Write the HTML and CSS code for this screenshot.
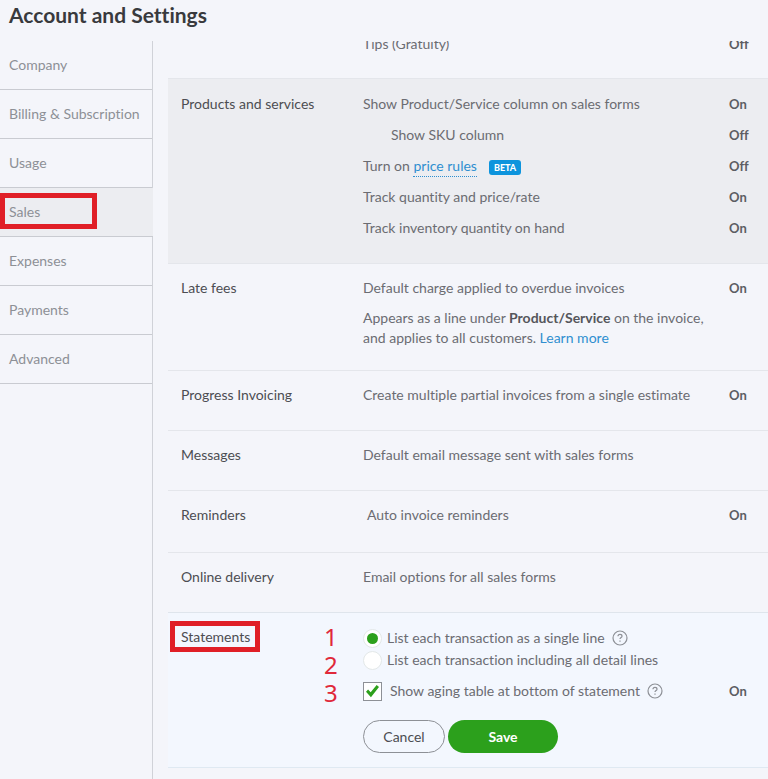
FILE: index.html
```html
<!DOCTYPE html>
<html lang="en">
<head>
  <meta charset="UTF-8">
  <meta name="viewport" content="width=device-width, initial-scale=1.0">
  <title>Account and Settings</title>
  <link rel="stylesheet" href="styles.css">
</head>
<body>
  <header class="page-header">
    <h1>Account and Settings</h1>
  </header>

  <div class="layout">
    <!-- Side navigation -->
    <nav class="sidebar">
      <a href="#company">Company</a>
      <a href="#billing">Billing &amp; Subscription</a>
      <a href="#usage">Usage</a>
      <a href="#sales" class="active">Sales<span class="highlight highlight-nav"></span></a>
      <a href="#expenses">Expenses</a>
      <a href="#payments">Payments</a>
      <a href="#advanced">Advanced</a>
    </nav>

    <!-- Sales settings -->
    <main class="settings">
      <section class="section section-first">
        <div class="lines">
          <div class="line"><span>Tips (Gratuity)</span><span class="status">Off</span></div>
        </div>
      </section>

      <section class="section section-hover">
        <h2>Products and services</h2>
        <div class="lines">
          <div class="line"><span>Show Product/Service column on sales forms</span><span class="status">On</span></div>
          <div class="line"><span class="indent">Show SKU column</span><span class="status">Off</span></div>
          <div class="line">
            <span>Turn on <a href="#price-rules" class="dotted">price rules</a><span class="badge">BETA</span></span>
            <span class="status">Off</span>
          </div>
          <div class="line"><span>Track quantity and price/rate</span><span class="status">On</span></div>
          <div class="line"><span>Track inventory quantity on hand</span><span class="status">On</span></div>
        </div>
      </section>

      <section class="section section-fees">
        <h2>Late fees</h2>
        <div class="lines">
          <div class="line"><span>Default charge applied to overdue invoices</span><span class="status">On</span></div>
          <p>Appears as a line under <strong>Product/Service</strong> on the invoice,<br>and applies to all customers. <a href="#learn-more">Learn more</a></p>
        </div>
      </section>

      <section class="section">
        <h2>Progress Invoicing</h2>
        <div class="lines">
          <div class="line"><span>Create multiple partial invoices from a single estimate</span><span class="status">On</span></div>
        </div>
      </section>

      <section class="section">
        <h2>Messages</h2>
        <div class="lines">
          <div class="line"><span>Default email message sent with sales forms</span></div>
        </div>
      </section>

      <section class="section section-reminders">
        <h2>Reminders</h2>
        <div class="lines">
          <div class="line"><span class="nudge">Auto invoice reminders</span><span class="status">On</span></div>
        </div>
      </section>

      <section class="section">
        <h2>Online delivery</h2>
        <div class="lines">
          <div class="line"><span>Email options for all sales forms</span></div>
        </div>
      </section>

      <section class="section section-editing">
        <h2>Statements<span class="highlight highlight-title"></span></h2>
        <form class="statement-form">
          <div class="steps">
            <span>1</span>
            <span>2</span>
            <span>3</span>
          </div>
          <div class="option">
            <input type="radio" name="listing" id="single-line" checked>
            <label for="single-line">List each transaction as a single line</label>
            <svg class="help" viewBox="0 0 16 16" aria-hidden="true">
              <circle cx="8" cy="8" r="7"/>
              <path d="M6 6.3C6 5.1 6.9 4.4 8 4.4s2 .7 2 1.8c0 1.3-2 1.4-2 2.9M8 10.6v1.2"/>
            </svg>
          </div>
          <div class="option">
            <input type="radio" name="listing" id="detail-lines">
            <label for="detail-lines">List each transaction including all detail lines</label>
          </div>
          <div class="option option-check">
            <input type="checkbox" id="aging-table" checked>
            <label for="aging-table">Show aging table at bottom of statement</label>
            <svg class="help" viewBox="0 0 16 16" aria-hidden="true">
              <circle cx="8" cy="8" r="7"/>
              <path d="M6 6.3C6 5.1 6.9 4.4 8 4.4s2 .7 2 1.8c0 1.3-2 1.4-2 2.9M8 10.6v1.2"/>
            </svg>
            <span class="status">On</span>
          </div>
          <div class="actions">
            <button type="button" class="btn-cancel">Cancel</button>
            <button type="button" class="btn-save">Save</button>
          </div>
        </form>
      </section>
    </main>
  </div>
</body>
</html>
```

FILE: styles.css
```css
* {
  margin: 0;
  padding: 0;
  box-sizing: border-box;
}

body {
  font-family: Lato, "Liberation Sans", sans-serif;
  font-size: 14px;
  line-height: 20px;
  font-variant-ligatures: none;
  background-color: #f4f5fa;
  color: #6b6c72;
  min-height: 100vh;
  display: flex;
  flex-direction: column;
}

a {
  color: #2f8fd0;
  text-decoration: none;
}

.page-header {
  padding: 2px 9px 13px;
}

h1 {
  font-size: 21px;
  line-height: 26px;
  font-weight: bold;
  color: #393a3d;
}

.layout {
  display: flex;
  flex: 1;
}

/* Side navigation */
.sidebar {
  width: 153px;
  flex-shrink: 0;
  border-right: 1px solid #d0d2d8;
}

.sidebar a {
  display: flex;
  align-items: center;
  position: relative;
  height: 49px;
  padding-left: 9px;
  border-bottom: 1px solid #c9cbd1;
  color: #8d9096;
}

.sidebar .active {
  background-color: #ecedf1;
  margin-right: -1px;
}

/* Settings list */
.settings {
  flex: 1;
  margin-left: 15px;
  overflow: hidden;
}

.section {
  display: grid;
  grid-template-columns: 182px 1fr;
  padding: 14px 0 25px 13px;
  border-top: 1px solid #e4e6eb;
}

.section .lines,
.section .statement-form {
  grid-column: 2;
}

/* scrolled partly under the page header */
.section-first {
  margin-top: -22px;
  padding-bottom: 24px;
}

.section-hover {
  background-color: #ecedf1;
  padding-top: 15px;
}

.section-fees {
  padding-bottom: 22px;
}

.section-fees .lines {
  gap: 10px;
}

.section-reminders {
  padding-bottom: 27px;
}

h2 {
  position: relative;
  font-size: 14px;
  line-height: 20px;
  font-weight: normal;
  color: #4c4d52;
}

.lines {
  display: flex;
  flex-direction: column;
  gap: 11px;
}

.line {
  display: flex;
  justify-content: space-between;
  height: 20px;
}

.status {
  width: 39px;
  font-size: 13px;
  font-weight: bold;
  color: #5c5d63;
}

.indent {
  padding-left: 28px;
}

.nudge {
  padding-left: 4px;
}

.dotted {
  padding-bottom: 2px;
  border-bottom: 1px dotted #2f8fd0;
}

.badge {
  display: inline-block;
  margin-left: 12px;
  padding: 2px 5px 1px;
  border-radius: 3px;
  background-color: #0d94dd;
  color: #fff;
  font-size: 9px;
  line-height: 12px;
  font-weight: 900;
}

strong {
  color: #55565b;
}

/* Statements form */
.section-editing {
  background-color: #f3f7fe;
  padding-bottom: 14px;
  border-color: #dfe5ec;
  border-bottom: 1px solid #dfe9f2;
}

.statement-form {
  position: relative;
}

.option {
  display: flex;
  align-items: center;
  height: 22px;
}

.option-check {
  margin-top: 9px;
}

.option .status {
  margin-left: auto;
}

input {
  appearance: none;
  display: grid;
  place-items: center;
  width: 19px;
  height: 19px;
  background-color: #fff;
}

input[type="radio"] {
  margin-right: 5px;
  border: 1px solid #e3e8e8;
  border-radius: 50%;
}

input[type="radio"]:checked::before {
  content: "";
  width: 11px;
  height: 11px;
  border-radius: 50%;
  background-color: #2ca01c;
}

input[type="checkbox"] {
  margin-right: 8px;
  border: 1px solid #8d9096;
}

input[type="checkbox"]:checked::before {
  content: "";
  width: 13px;
  height: 13px;
  background-color: #2ca01c;
  clip-path: polygon(0 55%, 16% 38%, 36% 60%, 82% 3%, 100% 19%, 38% 98%);
}

.help {
  width: 16px;
  height: 16px;
  margin-left: 7px;
  fill: none;
  stroke: #8d9096;
  stroke-width: 1.2;
}

.actions {
  display: flex;
  gap: 3px;
  margin-top: 18px;
}

button {
  height: 33px;
  border-radius: 17px;
  font-family: inherit;
  font-size: 14px;
  font-weight: bold;
  cursor: pointer;
}

.btn-cancel {
  width: 82px;
  border: 1px solid #8d9096;
  background-color: transparent;
  color: #4c4d52;
  font-weight: normal;
}

.btn-save {
  width: 110px;
  border: none;
  background-color: #2ca01c;
  color: #fff;
}

/* Red callouts */
.highlight {
  position: absolute;
  border: 5px solid #e01f27;
}

.highlight-nav {
  top: 5px;
  left: 0;
  width: 97px;
  height: 36px;
}

.highlight-title {
  top: -6px;
  left: -11px;
  width: 90px;
  height: 31px;
}

.steps {
  position: absolute;
  top: -4px;
  left: -39px;
  display: flex;
  flex-direction: column;
  font-family: "Noto Sans", sans-serif;
  font-size: 24px;
  line-height: 28px;
  color: #e0293a;
}
```
